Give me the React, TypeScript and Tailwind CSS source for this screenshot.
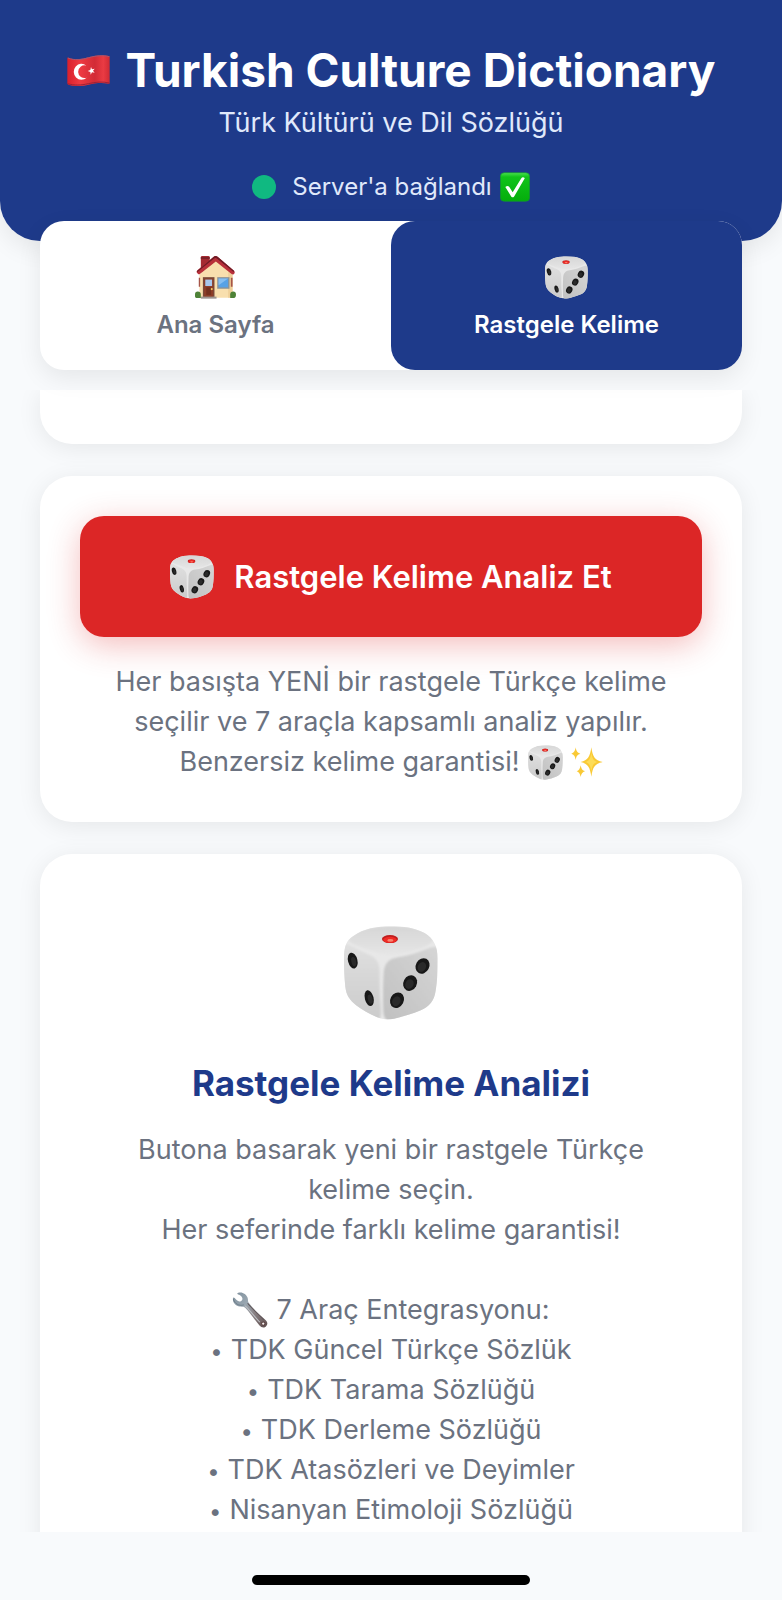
import { useId, useState } from "react";

type IconProps = { className?: string };

function Dice({ className }: IconProps) {
  const id = useId();
  return (
    <svg viewBox="0 0 280 278" className={className} aria-hidden="true">
      <defs>
        <linearGradient id={`${id}t`} x1="0" y1="0" x2="0" y2="1">
          <stop offset="0" stopColor="#d6d6d6" />
          <stop offset="1" stopColor="#e6e6e6" />
        </linearGradient>
        <linearGradient id={`${id}l`} x1="0" y1="0" x2="0" y2="1">
          <stop offset="0" stopColor="#e0e0e0" />
          <stop offset="1" stopColor="#cbcbcb" />
        </linearGradient>
        <linearGradient id={`${id}r`} x1="0" y1="1" x2="1" y2="0">
          <stop offset="0" stopColor="#c0c0c0" />
          <stop offset="1" stopColor="#d6d6d6" />
        </linearGradient>
        <filter id={`${id}b`} x="-10%" y="-10%" width="120%" height="120%">
          <feGaussianBlur stdDeviation="3" />
        </filter>
        <clipPath id={`${id}c`}>
          <path d="M0 100C0 62 6 42 28 29 58 7 98 0 138 0c38 0 72 4 102 20 28 16 39 42 39 76 0 37-1 66-6 96-4 30-18 46-44 58-28 12-58 20-80 25-20 4-34 3-52-5-22-9-42-20-60-34C15 218 7 205 4 181 1 151 0 125 0 100z" />
        </clipPath>
      </defs>
      <g clipPath={`url(#${id}c)`}>
        <path d="M0 0h280v278H0z" fill="#e8e8e8" />
        <g filter={`url(#${id}b)`}>
          <path d="M14 40C40-14 240-14 266 36c-2 14-20 24-38 30-26 9-50 14-73 18-18 3-32 2-48-2C76 72 46 62 26 52c-8-4-12-8-12-12z" fill={`url(#${id}t)`} />
          <path d="M-6 52c14-2 28 6 42 14 15 8 30 14 42 20 18 8 27 22 28 46 0 32 0 67 3 102 1 22 2 40-6 44C40 276 0 250-6 200z" fill={`url(#${id}l)`} />
          <path d="M162 92c32-5 60-14 88-26 20-8 36-6 36 10v150c-20 30-110 56-140 58-20 0-29-10-29-36-1-34-1-70 1-104 1-32 13-48 44-52z" fill={`url(#${id}r)`} />
        </g>
      </g>
      <ellipse cx="137" cy="38" rx="24" ry="12" fill="#c01f1f" />
      <ellipse cx="137" cy="40" rx="20" ry="9" fill="#ef2b26" />
      <ellipse cx="138" cy="42" rx="9" ry="4" fill="#f9846f" />
      <g fill="#181818">
        <ellipse cx="26" cy="102" rx="14" ry="24" transform="rotate(-14 26 102)" />
        <ellipse cx="75" cy="214" rx="13" ry="24" transform="rotate(-14 75 214)" />
        <ellipse cx="234" cy="118" rx="20" ry="24" transform="rotate(28 234 118)" />
        <ellipse cx="197" cy="169" rx="20" ry="24" transform="rotate(28 197 169)" />
        <ellipse cx="158" cy="220" rx="20" ry="24" transform="rotate(28 158 220)" />
      </g>
      <g fill="#2a2a2a">
        <ellipse cx="29" cy="105" rx="7" ry="14" transform="rotate(-14 29 105)" />
        <ellipse cx="78" cy="217" rx="7" ry="14" transform="rotate(-14 78 217)" />
        <ellipse cx="232" cy="121" rx="12" ry="15" transform="rotate(28 232 121)" />
        <ellipse cx="195" cy="172" rx="12" ry="15" transform="rotate(28 195 172)" />
        <ellipse cx="156" cy="223" rx="12" ry="15" transform="rotate(28 156 223)" />
      </g>
    </svg>
  );
}

function Flag({ className }: IconProps) {
  const id = useId();
  return (
    <svg viewBox="0 0 129 93" className={className} aria-hidden="true">
      <defs>
        <linearGradient id={id} x1="0" y1="0" x2="1" y2="0">
          <stop offset="0" stopColor="#d9202c" />
          <stop offset="0.3" stopColor="#ee3a42" />
          <stop offset="0.65" stopColor="#d22b36" />
          <stop offset="0.85" stopColor="#ea3b43" />
          <stop offset="1" stopColor="#cf2a34" />
        </linearGradient>
      </defs>
      <path d="M3 8c21 8 40 5 62-1C87 1 107-1 126 3c2 0 2 2 2 4v76c0 3-2 4-5 3-19-4-37-2-58 3-22 5-42 6-61 0-2-1-3-2-3-4V11c0-2 0-4 2-3z" fill={`url(#${id})`} />
      <path d="M3 9c21 8 40 5 62-1C87 2 107 0 127 5" fill="none" stroke="#a6566e" strokeWidth="3" />
      <path d="M2 86c20 6 40 5 62 0s42-7 63-2" fill="none" stroke="#9c2336" strokeWidth="3" />
      <path d="M58 32a23 24 0 1 0 1 36 19 19 0 1 1-1-36z" fill="#fff" />
      <path d="m72 36 3 7 8-2-5 6 5 6-8-1-4 7-1-8-8-3 8-3z" fill="#fff" />
    </svg>
  );
}

function CheckBadge({ className }: IconProps) {
  const id = useId();
  return (
    <svg viewBox="0 0 90 88" className={className} aria-hidden="true">
      <defs>
        <linearGradient id={id} x1="0" y1="0" x2="0" y2="1">
          <stop offset="0" stopColor="#4be04f" />
          <stop offset="0.15" stopColor="#10c41a" />
          <stop offset="1" stopColor="#04ad0c" />
        </linearGradient>
      </defs>
      <rect x="1" y="1" width="88" height="86" rx="12" fill={`url(#${id})`} stroke="#149432" strokeWidth="2" />
      <path d="M16 44q7-6 12 0l10 16 25-41q4-6 10-3 2 1 0 4L42 73q-4 4-8 0L16 44z" fill="#fff" />
    </svg>
  );
}

function House({ className }: IconProps) {
  return (
    <svg viewBox="0 0 122 126" className={className} aria-hidden="true">
      <path d="M18 3q0-3 4-3h18q4 0 4 3v30L18 48z" fill="#a52a32" />
      <path d="M18 3h26v6H18z" fill="#7d2028" />
      <path d="M14 54 61 8l50 46v68H14z" fill="#f8dfae" />
      <path d="M98 46l13 10v66H98z" fill="#efd09a" />
      <path d="M61 0q4 0 7 3l48 41q3 4 0 8l-3 2q-3 1-6-2L62 16 16 52q-3 3-6 1l-4-5q-1-3 2-6L55 3q3-3 6-3z" fill="#b8303a" />
      <path d="M61 0q4 0 7 3l48 41-2 3L66 8q-5-4-10 0L8 47l-2-2 49-42q3-3 6-3z" fill="#6f1b25" />
      <path d="M24 62h34v58H24z" fill="#7a4a3a" />
      <path d="M28 66h26v54H28z" fill="#8d3d27" />
      <path d="M31 69h20v19H31z" fill="#a8c7ec" />
      <path d="M34 92h14v22H34z" fill="#74301f" />
      <circle cx="50" cy="97" r="3" fill="#f2cd68" />
      <path d="M66 62h36v34H66z" fill="#8c9295" />
      <path d="M70 66h28v26H70z" fill="#57a2e6" />
      <path d="M70 66h28L70 86z" fill="#85bef1" />
      <path d="M12 64h4v26h-4zM106 64h5v26h-5z" fill="#a65549" />
      <path d="M18 119h46v6H18z" fill="#9d9591" />
      <path d="M1 112q0-8 8-8 9 0 9 9v10H5q-5 0-4-11z" fill="#4e8237" />
      <path d="M104 113q0-9 9-9 8 0 8 9 0 10-6 10h-11z" fill="#4e8237" />
    </svg>
  );
}

function Sparkles({ className }: IconProps) {
  return (
    <svg viewBox="0 0 96 92" className={className} aria-hidden="true">
      <path d="M61 2c4 28 10 39 34 44-24 5-30 16-34 44-4-28-10-39-32-44 22-5 28-16 32-44z" fill="#f9c935" />
      <path d="M61 18c3 18 6 25 20 28-14 3-17 10-20 28-3-18-6-25-19-28 13-3 16-10 19-28z" fill="#fddc58" />
      <path d="M14 2c2 12 5 16 14 19-9 3-12 7-14 19C12 28 9 24 1 21 9 18 12 14 14 2z" fill="#f9c935" />
      <path d="M29 56c2 11 5 15 13 18-8 3-11 7-13 17-2-10-5-14-12-17 7-3 10-7 12-18z" fill="#f9c935" />
    </svg>
  );
}

function Wrench({ className }: IconProps) {
  const id = useId();
  return (
    <svg viewBox="0 0 104 106" className={className} aria-hidden="true">
      <defs>
        <linearGradient id={id} x1="0" y1="0" x2="1" y2="1">
          <stop offset="0" stopColor="#7d8f9c" />
          <stop offset="0.35" stopColor="#9aa7b1" />
          <stop offset="0.6" stopColor="#8a8284" />
          <stop offset="1" stopColor="#5e4c4d" />
        </linearGradient>
      </defs>
      <path d="M16 3c12-5 25 3 29 14 2 6 0 11 3 15 13 18 31 33 48 49 8 7 9 13 4 19-5 7-14 6-20-1C65 81 52 61 37 46c-4-4-9-2-15-3C9 41 0 30 2 20c0-4 2-5 5-2 5 6 10 12 18 9 6-3 6-9 2-14-3-4-6-5-10-6-3-1-3-3-1-4z" fill={`url(#${id})`} />
      <path d="M45 33c15 18 32 33 48 49" fill="none" stroke="#5f5659" strokeWidth="3" />
      <path d="M38 41c16 16 30 34 43 48" fill="none" stroke="#bcbfc3" strokeWidth="3" />
      <path d="M3 20c3 15 17 22 31 18" fill="none" stroke="#60717e" strokeWidth="2" />
      <circle cx="91" cy="93" r="5" fill="#f6f1f1" stroke="#5b4040" strokeWidth="3" />
    </svg>
  );
}

const tabs = [
  { id: "home", label: "Ana Sayfa", Icon: House },
  { id: "random", label: "Rastgele Kelime", Icon: Dice },
];

const tools = [
  "TDK Güncel Türkçe Sözlük",
  "TDK Tarama Sözlüğü",
  "TDK Derleme Sözlüğü",
  "TDK Atasözleri ve Deyimler",
  "Nisanyan Etimoloji Sözlüğü",
];

export default function App() {
  const [active, setActive] = useState("random");

  return (
    <div className="flex h-screen flex-col overflow-hidden bg-[#f8fafc] font-['Inter','Liberation_Sans',sans-serif] text-[27px] leading-10 text-[#6b7280]">
      <header className="flex shrink-0 flex-col items-center rounded-b-[40px] bg-[#1e3a8a] px-10 pt-10 pb-9 shadow-[0_8px_24px_rgba(0,0,0,0.08)]">
        <h1 className="flex items-center gap-4 text-[46px] leading-[60px] font-bold text-white">
          <Flag className="h-[31px] w-[43px]" />
          Turkish Culture Dictionary
        </h1>
        <p className="mt-[3px] text-[#e0e9fb]">Türk Kültürü ve Dil Sözlüğü</p>
        <p role="status" className="mt-[26px] flex items-center text-[24px] leading-9 text-[#e0e9fb]">
          <span className="mr-4 size-6 rounded-full bg-[#10b981]" />
          Server'a bağlandı
          <CheckBadge className="ml-2 size-[30px]" />
        </p>
      </header>

      <nav className="z-10 mx-10 -mt-5 flex shrink-0 rounded-3xl bg-white shadow-[0_8px_24px_rgba(0,0,0,0.08)]">
        {tabs.map(({ id, label, Icon }) => (
          <button
            key={id}
            type="button"
            aria-current={active === id ? "page" : undefined}
            onClick={() => setActive(id)}
            className={
              active === id
                ? "flex flex-1 flex-col items-center gap-2 rounded-3xl bg-[#1e3a8a] pt-[35px] pb-[27px] text-[24px] leading-9 font-semibold text-white"
                : "flex flex-1 flex-col items-center gap-2 rounded-3xl pt-[35px] pb-[27px] text-[24px] leading-9 font-semibold text-[#6b7280]"
            }
          >
            <Icon className="size-[43px]" />
            {label}
          </button>
        ))}
      </nav>

      <main className="mt-5 flex flex-1 flex-col gap-8 overflow-y-auto px-10 text-center [scrollbar-width:none]">
        <section className="h-[54px] shrink-0 rounded-b-4xl bg-white shadow-[0_4px_24px_rgba(0,0,0,0.08)]" />

        <section className="shrink-0 rounded-4xl bg-white p-10 shadow-[0_4px_24px_rgba(0,0,0,0.08)]">
          <button
            type="button"
            className="flex h-[121px] w-full items-center justify-center gap-5 rounded-3xl bg-[#dc2626] text-[31px] font-semibold text-white shadow-[0_8px_32px_rgba(220,38,38,0.3)]"
          >
            <Dice className="size-11" />
            Rastgele Kelime Analiz Et
          </button>
          <p className="mt-[25px]">
            Her basışta YENİ bir rastgele Türkçe kelime seçilir ve 7 araçla kapsamlı analiz yapılır.
            <span className="flex items-center justify-center">
              Benzersiz kelime garantisi!
              <Dice className="ml-2 size-[35px]" />
              <Sparkles className="ml-2 size-8" />
            </span>
          </p>
        </section>

        <section className="flex shrink-0 flex-col items-center rounded-4xl bg-white px-20 pt-[72px] pb-20 shadow-[0_4px_24px_rgba(0,0,0,0.08)]">
          <Dice className="size-[94px]" />
          <h2 className="mt-[39px] text-[35px] leading-[48px] font-bold text-[#1e3a8a]">
            Rastgele Kelime Analizi
          </h2>
          <p className="mt-[23px]">Butona basarak yeni bir rastgele Türkçe kelime seçin.</p>
          <p>Her seferinde farklı kelime garantisi!</p>
          <h3 className="mt-10 flex items-center gap-2">
            <Wrench className="size-9" />7 Araç Entegrasyonu:
          </h3>
          <ul>
            {tools.map((tool) => (
              <li key={tool}>
                <span className="mr-2 text-[22px] leading-none">•</span>
                {tool}
              </li>
            ))}
          </ul>
        </section>
      </main>

      <footer className="flex h-[68px] shrink-0 items-center justify-center pt-7">
        <div className="h-[10px] w-[278px] rounded-full bg-black" />
      </footer>
    </div>
  );
}
